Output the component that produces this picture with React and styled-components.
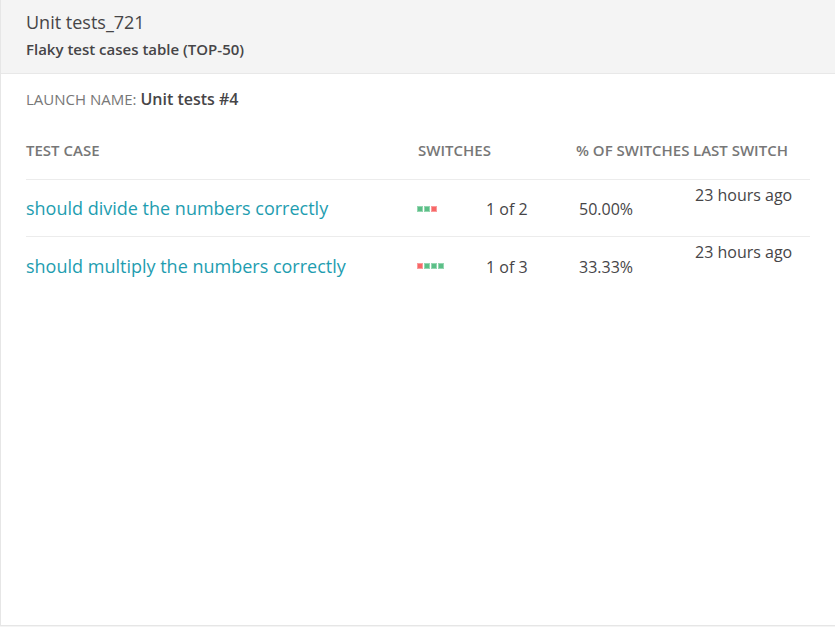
import React from "react";
import styled, { createGlobalStyle } from "styled-components";

const Global = createGlobalStyle`
  html, body { margin: 0; padding: 0; background: #f4f4f4; }
  body { font-family: "Open Sans", "Noto Sans", sans-serif; }
  * { box-sizing: border-box; }
`;

const Widget = styled.div`
  width: 835px;
  height: 626px;
  background: #ffffff;
  border-left: 1px solid #e6e6e6;
  border-bottom: 1px solid #e6e6e6;
  display: flex;
  flex-direction: column;
`;

const Header = styled.div`
  height: 74px;
  background: #f4f4f4;
  border-bottom: 1px solid #e8e8e8;
  padding: 10px 25px 0;
  display: flex;
  flex-direction: column;
`;

const Title = styled.div`
  font-size: 18px;
  line-height: 24px;
  color: #464547;
`;

const Subtitle = styled.div`
  font-size: 15px;
  font-weight: 600;
  line-height: 20px;
  margin-top: 5px;
  color: #464547;
`;

const Body = styled.div`
  padding: 0 25px;
`;

const LaunchLine = styled.div`
  margin-top: 15px;
  font-size: 15px;
  line-height: 20px;
  color: #777777;
  text-transform: uppercase;
`;

const LaunchValue = styled.span`
  text-transform: none;
  font-size: 16px;
  font-weight: 600;
  color: #464547;
`;

const Row = styled.div`
  display: grid;
  grid-template-columns: 391px 158px 117px 1fr;
  border-bottom: ${(p) => (p.$last ? "none" : "1px solid #ececec")};
  height: ${(p) => (p.$head ? "71px" : "57px")};
  align-items: ${(p) => (p.$head ? "end" : "center")};
  padding-bottom: ${(p) => (p.$head ? "19px" : "0")};
`;

const HeadCell = styled.div`
  font-size: 15px;
  font-weight: 600;
  line-height: 20px;
  color: #777777;
  text-transform: uppercase;
  white-space: nowrap;
  padding-left: ${(p) => p.$pl || 0}px;
`;

const CaseLink = styled.a`
  font-size: 18px;
  color: #1e9db0;
  text-decoration: none;
  white-space: nowrap;
`;

const SwitchCell = styled.div`
  display: flex;
  align-items: center;
`;

const Squares = styled.div`
  display: flex;
  gap: 1px;
  width: 69px;
  padding-top: 1px;
`;

const Square = styled.span`
  width: 6px;
  height: 6px;
  background: ${(p) => (p.$fail ? "#f76767" : "#5bbf87")};
  border: 1px solid ${(p) => (p.$fail ? "#fa9c9c" : "#95d6b1")};
`;

const Cell = styled.div`
  font-size: 16px;
  color: #464547;
  padding-left: ${(p) => p.$pl || 0}px;
  padding-top: 2px;
`;

const TimeCell = styled.div`
  font-size: 16px;
  color: #464547;
  align-self: start;
  padding-top: 4px;
  padding-left: 3px;
  line-height: 22px;
`;

const rows = [
  { name: "should divide the numbers correctly", statuses: [0, 0, 1], count: "1 of 2", pct: "50.00%" },
  { name: "should multiply the numbers correctly", statuses: [1, 0, 0, 0], count: "1 of 3", pct: "33.33%" },
];

export default function App() {
  return (
    <>
      <Global />
      <Widget>
        <Header>
          <Title>Unit tests_721</Title>
          <Subtitle>Flaky test cases table (TOP-50)</Subtitle>
        </Header>
        <Body>
          <LaunchLine>
            Launch name: <LaunchValue>Unit tests #4</LaunchValue>
          </LaunchLine>
          <Row $head>
            <HeadCell>Test case</HeadCell>
            <HeadCell $pl={1}>Switches</HeadCell>
            <HeadCell $pl={1}>% of switches</HeadCell>
            <HeadCell $pl={1}>Last switch</HeadCell>
          </Row>
          {rows.map((r, i) => (
            <Row key={r.name} $last={i === rows.length - 1}>
              <CaseLink href="#">{r.name}</CaseLink>
              <SwitchCell>
                <Squares>
                  {r.statuses.map((s, j) => (
                    <Square key={j} $fail={s === 1} />
                  ))}
                </Squares>
                <Cell>{r.count}</Cell>
              </SwitchCell>
              <Cell $pl={4}>{r.pct}</Cell>
              <TimeCell>23 hours ago</TimeCell>
            </Row>
          ))}
        </Body>
      </Widget>
    </>
  );
}
